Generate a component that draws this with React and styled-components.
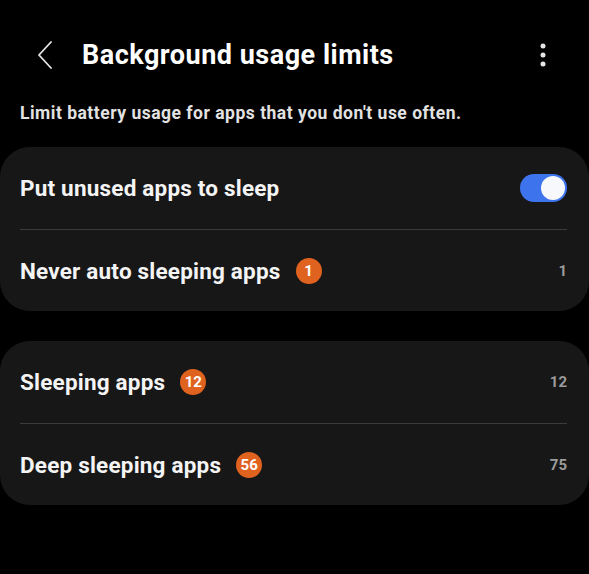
import React from "react";
import styled, { createGlobalStyle } from "styled-components";

const GlobalStyle = createGlobalStyle`
  body {
    margin: 0;
    background: #000;
    font-family: Roboto, "Noto Sans", sans-serif;
    -webkit-font-smoothing: antialiased;
  }
`;

const Screen = styled.div`
  width: 589px;
  height: 574px;
  background: #000;
  color: #fff;
  overflow: hidden;
`;

const Header = styled.div`
  height: 50px;
  padding-top: 30px;
  display: flex;
  align-items: center;
`;

const BackButton = styled.div`
  width: 82px;
  display: flex;
  justify-content: flex-start;
  padding-left: 37px;
  box-sizing: border-box;
`;

const Title = styled.h1`
  flex: 1;
  margin: 0;
  font-size: 27px;
  font-weight: 700;
  letter-spacing: 0.5px;
`;

const MoreButton = styled.div`
  width: 60px;
  display: flex;
  justify-content: center;
  padding-right: 16px;
`;

const Subtitle = styled.p`
  margin: 23px 0 0;
  padding: 0 20px;
  line-height: 20px;
  font-size: 17.5px;
  font-weight: 700;
  color: #e2e2e2;
  letter-spacing: 0.5px;
`;

const Card = styled.div`
  margin-top: ${(p) => p.$top}px;
  background: #171717;
  border-radius: 30px;
  padding: 0 22px 0 20px;
`;

const Row = styled.div`
  height: 82px;
  display: flex;
  align-items: center;
  border-top: ${(p) => (p.$divider ? "1.5px solid #3b3b3b" : "none")};
  box-sizing: border-box;
`;

const Label = styled.span`
  font-size: 22.5px;
  font-weight: 700;
  color: #f4f4f4;
  letter-spacing: 0.2px;
`;

const Badge = styled.span`
  margin-left: 15px;
  min-width: 26px;
  height: 26px;
  padding: 0 4px;
  box-sizing: border-box;
  border-radius: 13px;
  background: #e0621f;
  color: #fff;
  font-size: 15px;
  font-weight: 700;
  display: inline-flex;
  align-items: center;
  justify-content: center;
`;

const Count = styled.span`
  margin-left: auto;
  font-size: 15px;
  font-weight: 700;
  color: #9c9c9c;
`;

const Toggle = styled.div`
  margin-left: auto;
  width: 47px;
  height: 28px;
  border-radius: 14px;
  background: #3d74ee;
  display: flex;
  align-items: center;
  justify-content: flex-end;
  padding: 0 2px;
  box-sizing: border-box;
`;

const Knob = styled.div`
  width: 24px;
  height: 24px;
  border-radius: 50%;
  background: #f7f8fb;
`;

function ListRow({ label, badge, count, toggle, divider }) {
  return (
    <Row $divider={divider}>
      <Label>{label}</Label>
      {badge && <Badge>{badge}</Badge>}
      {toggle ? (
        <Toggle>
          <Knob />
        </Toggle>
      ) : (
        <Count>{count}</Count>
      )}
    </Row>
  );
}

export default function App() {
  return (
    <Screen>
      <GlobalStyle />
      <Header>
        <BackButton>
          <svg width="16" height="28" viewBox="0 0 16 28">
            <path d="M14 1 L2 14 L14 27" fill="none" stroke="#e6e6e6" strokeWidth="1.8" strokeLinecap="round" strokeLinejoin="round" />
          </svg>
        </BackButton>
        <Title>Background usage limits</Title>
        <MoreButton>
          <svg width="6" height="24" viewBox="0 0 6 24">
            <circle cx="3" cy="3" r="2.5" fill="#e6e6e6" />
            <circle cx="3" cy="12" r="2.5" fill="#e6e6e6" />
            <circle cx="3" cy="21" r="2.5" fill="#e6e6e6" />
          </svg>
        </MoreButton>
      </Header>
      <Subtitle>Limit battery usage for apps that you don't use often.</Subtitle>
      <Card $top={24}>
        <ListRow label="Put unused apps to sleep" toggle />
        <ListRow label="Never auto sleeping apps" badge="1" count="1" divider />
      </Card>
      <Card $top={30}>
        <ListRow label="Sleeping apps" badge="12" count="12" />
        <ListRow label="Deep sleeping apps" badge="56" count="75" divider />
      </Card>
    </Screen>
  );
}
